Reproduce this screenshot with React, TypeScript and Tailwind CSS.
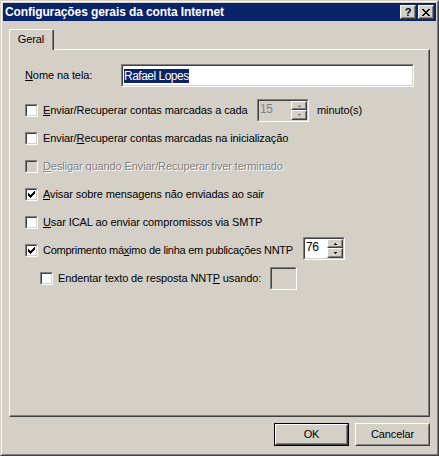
import React from 'react';

type BoxProps = { className?: string; inner?: string; children?: React.ReactNode };

const Sunken = ({ className = '', inner = '', children }: BoxProps) => (
  <div className={`border border-t-[#808080] border-r-white border-b-white border-l-[#808080] ${className}`}>
    <div className={`h-full w-full border border-t-[#404040] border-r-[#d4d0c8] border-b-[#d4d0c8] border-l-[#404040] ${inner}`}>
      {children}
    </div>
  </div>
);

const Raised = ({ className = '', inner = '', children }: BoxProps) => (
  <div className={`border border-t-white border-r-[#404040] border-b-[#404040] border-l-white ${className}`}>
    <div className={`h-full w-full border border-t-[#d4d0c8] border-r-[#808080] border-b-[#808080] border-l-[#d4d0c8] ${inner}`}>
      {children}
    </div>
  </div>
);

const CheckBox = ({ checked = false, disabled = false }: { checked?: boolean; disabled?: boolean }) => (
  <Sunken className="h-[13px] w-[13px] shrink-0" inner={disabled ? 'bg-[#d4d0c8]' : 'bg-white'}>
    {checked && (
      <svg width="7" height="7" viewBox="0 0 7 7" className="m-[1px]" shapeRendering="crispEdges">
        <path
          d="M6 0h1v1H6zM5 1h2v1H5zM0 2h1v1H0zM4 2h3v1H4zM0 3h2v1H0zM3 3h3v1H3zM0 4h5v1H0zM1 5h3v1H1zM2 6h1v1H2z"
          fill="#000"
        />
      </svg>
    )}
  </Sunken>
);

const Arrow = ({ up, color }: { up?: boolean; color: string }) => (
  <svg width="3" height="2" viewBox="0 0 3 2" shapeRendering="crispEdges">
    <path d={up ? 'M1 0h1v1H1zM0 1h3v1H0z' : 'M0 0h3v1H0zM1 1h1v1H1z'} fill={color} />
  </svg>
);

const Spin = ({ value, className = '', disabled = false }: { value: string; className?: string; disabled?: boolean }) => (
  <Sunken
    className={`h-[23px] shrink-0 ${className}`}
    inner={`flex ${disabled ? 'bg-[#d4d0c8] text-[#808080]' : 'bg-white text-black'}`}
  >
    <span className="flex-1 pl-[1px] pt-[1px] text-[12px] leading-[14px] tracking-[-0.3px]">{value}</span>
    <div className="flex w-[16px] flex-col">
      <Raised className="h-[9px]" inner="flex items-center justify-center bg-[#d4d0c8]">
        <Arrow up color={disabled ? '#808080' : '#000'} />
      </Raised>
      <Raised className="h-[10px]" inner="flex items-center justify-center bg-[#d4d0c8]">
        <Arrow color={disabled ? '#808080' : '#000'} />
      </Raised>
    </div>
  </Sunken>
);

const Row = ({ children, className = '' }: { children: React.ReactNode; className?: string }) => (
  <div className={`flex h-[23px] items-center whitespace-nowrap ${className}`}>{children}</div>
);

const App = () => {
  return (
    <div className="h-[456px] w-[439px] border border-t-[#d4d0c8] border-r-[#404040] border-b-[#404040] border-l-[#d4d0c8] bg-[#d4d0c8] font-['Liberation_Sans',Arial,sans-serif] text-[11px] leading-[13px] tracking-[-0.1px] text-black">
      <div className="h-full border border-t-white border-r-[#808080] border-b-[#808080] border-l-white p-[1px]">
        {/* title bar */}
        <div className="flex h-[18px] items-center bg-[#0a246a] pl-[2px] pr-[2px]">
          <span className="flex-1 text-[12px] font-bold tracking-[-0.1px] text-white">Configurações gerais da conta Internet</span>
          <div className="flex gap-[2px]">
            <Raised className="h-[14px] w-[16px]" inner="flex items-center justify-center bg-[#d4d0c8]">
              <span className="text-[11px] font-bold leading-[10px]">?</span>
            </Raised>
            <Raised className="h-[14px] w-[16px]" inner="flex items-center justify-center bg-[#d4d0c8]">
              <svg width="8" height="7" viewBox="0 0 8 7" shapeRendering="crispEdges">
                <path
                  d="M0 0h2v1H0zM6 0h2v1H6zM1 1h2v1H1zM5 1h2v1H5zM2 2h4v1H2zM3 3h2v1H3zM2 4h4v1H2zM1 5h2v1H1zM5 5h2v1H5zM0 6h2v1H0zM6 6h2v1H6z"
                  fill="#000"
                />
              </svg>
            </Raised>
          </div>
        </div>

        <div className="pl-[6px] pt-[8px]">
          {/* tab */}
          <div className="relative z-10 -mb-[1px] flex h-[21px] w-[45px] items-start justify-center rounded-t-[2px] border border-b-0 border-t-white border-r-[#404040] border-l-white bg-[#d4d0c8]">
            <div className="flex h-full w-full items-start justify-center border-r border-r-[#808080] pt-[3px]">Geral</div>
          </div>

          {/* panel */}
          <div className="h-[368px] w-[421px] border border-t-white border-r-[#404040] border-b-[#404040] border-l-white">
            <div className="h-full w-full border-r border-b border-r-[#808080] border-b-[#808080] pl-[15px] pt-[14px]">
              <Row>
                <span className="w-[96px] shrink-0">
                  <u>N</u>ome na tela:
                </span>
                <Sunken className="h-[23px] w-[293px]" inner="flex items-center bg-white pl-[1px]">
                  <span className="bg-[#0a246a] text-[12px] leading-[14px] tracking-[-0.5px] text-white">Rafael Lopes</span>
                </Sunken>
              </Row>

              <div className="mt-[12px] flex flex-col gap-[5px]">
                <Row>
                  <CheckBox />
                  <span className="ml-[5px] w-[214px] shrink-0">
                    <u>E</u>nviar/Recuperar contas marcadas a cada
                  </span>
                  <Spin value="15" disabled className="w-[52px]" />
                  <span className="ml-[8px]">minuto(s)</span>
                </Row>
                <Row>
                  <CheckBox />
                  <span className="ml-[5px]">
                    Enviar/<u>R</u>ecuperar contas marcadas na inicialização
                  </span>
                </Row>
                <Row>
                  <CheckBox disabled />
                  <span className="ml-[5px] text-[#808080] [text-shadow:1px_1px_0_#fff]">
                    <u>D</u>esligar quando Enviar/Recuperar tiver terminado
                  </span>
                </Row>
                <Row>
                  <CheckBox checked />
                  <span className="ml-[5px]">
                    <u>A</u>visar sobre mensagens não enviadas ao sair
                  </span>
                </Row>
                <Row>
                  <CheckBox />
                  <span className="ml-[5px]">
                    <u>U</u>sar ICAL ao enviar compromissos via SMTP
                  </span>
                </Row>
                <Row>
                  <CheckBox checked />
                  <span className="ml-[5px] w-[260px] shrink-0 tracking-[-0.25px]">
                    Comprimento má<u>x</u>imo de linha em publicações NNTP
                  </span>
                  <Spin value="76" className="mb-[4px] w-[42px]" />
                </Row>
                <Row className="pl-[15px]">
                  <CheckBox />
                  <span className="ml-[5px] w-[212px] shrink-0">
                    Endentar texto de resposta NNT<u>P</u> usando:
                  </span>
                  <Sunken className="h-[23px] w-[27px]" inner="bg-[#d4d0c8]" />
                </Row>
              </div>
            </div>
          </div>

          {/* buttons */}
          <div className="mt-[6px] flex w-[421px] justify-end gap-[6px]">
            <div className="h-[23px] w-[75px] border border-black">
              <Raised className="h-full w-full" inner="flex items-center justify-center">
                OK
              </Raised>
            </div>
            <Raised className="h-[23px] w-[75px]" inner="flex items-center justify-center">
              Cancelar
            </Raised>
          </div>
        </div>
      </div>
    </div>
  );
};

export default App;
